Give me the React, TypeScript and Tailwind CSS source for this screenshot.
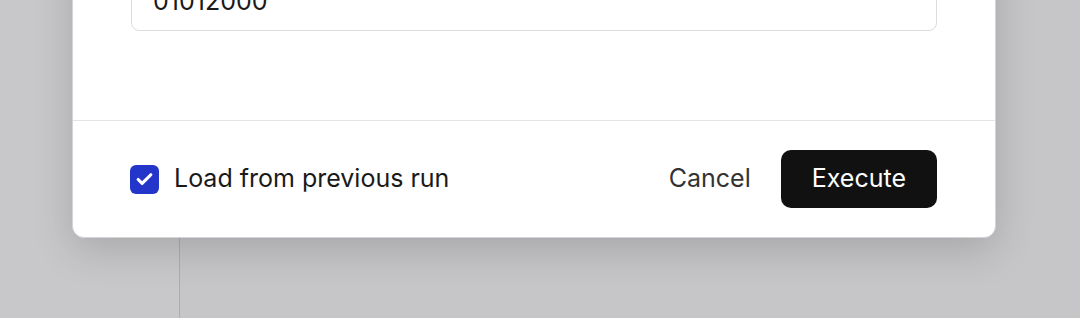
import { Check } from "lucide-react"

export default function App() {
  return (
    <div
      className="relative flex h-[318px] w-[1080px] overflow-hidden bg-[#c6c6c8]"
      style={{ fontFamily: "Inter, 'Noto Sans', sans-serif" }}
    >
      {/* page behind the overlay */}
      <div className="h-full w-[180px] border-r border-[#adadaf] bg-[#c8c8ca]" />
      <div className="flex-1" />

      {/* dialog */}
      <div className="absolute left-[72px] top-[-60px] w-[924px] rounded-[12px] border border-[#d4d4d8] bg-white shadow-[0_12px_40px_rgba(0,0,0,0.16)]">
        <div className="px-[58px] pb-[89px] pt-[32px]">
          <div className="flex h-[58px] items-center rounded-[8px] border border-[#dcdce0] px-[21px] text-[25px] text-[#1a1a1a]">
            01012000
          </div>
        </div>
        <div className="flex items-center justify-between border-t border-[#e4e4e7] py-[29px] pl-[57px] pr-[58px]">
          <label className="flex items-center gap-[15px] text-[25px] text-[#1a1a1a]">
            <span className="flex h-[29px] w-[29px] items-center justify-center rounded-[6px] bg-[#2436c9]">
              <Check className="h-[19px] w-[19px] text-white" strokeWidth={4} />
            </span>
            Load from previous run
          </label>
          <div className="flex items-center gap-[30px]">
            <button className="text-[25px] text-[#333333]">Cancel</button>
            <button className="h-[58px] rounded-[10px] bg-[#111111] px-[31px] text-[25px] text-white">
              Execute
            </button>
          </div>
        </div>
      </div>
    </div>
  )
}
